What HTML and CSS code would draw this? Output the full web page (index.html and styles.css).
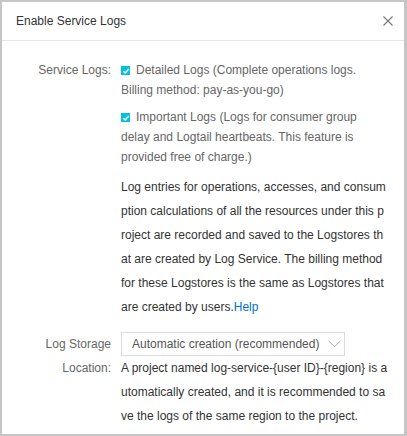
FILE: index.html
```html
<!DOCTYPE html>
<html>
<head>
<meta charset="utf-8">
<link rel="stylesheet" href="styles.css">
</head>
<body>
<div class="dialog">
  <div class="header">
    <span class="title">Enable Service Logs</span>
    <svg class="close" width="10" height="10" viewBox="0 0 10 10"><path d="M0.5 0.5L9.5 9.5M9.5 0.5L0.5 9.5" stroke="#777" stroke-width="1.1" fill="none"/></svg>
  </div>
  <div class="body">
    <div class="row">
      <div class="label label-sm">Service Logs:</div>
      <div class="content">
        <p class="check"><span class="box"><svg width="10" height="10" viewBox="0 0 10 10"><path d="M2.3 5.2L4.2 7L7.8 3" stroke="#fff" stroke-width="1.5" fill="none"/></svg></span>Detailed Logs (Complete operations logs. Billing method: pay-as-you-go)</p>
        <p class="check second"><span class="box"><svg width="10" height="10" viewBox="0 0 10 10"><path d="M2.3 5.2L4.2 7L7.8 3" stroke="#fff" stroke-width="1.5" fill="none"/></svg></span>Important Logs (Logs for consumer group delay and Logtail heartbeats. This feature is provided free of charge.)</p>
        <p class="desc">Log entries for operations, accesses, and consumption calculations of all the resources under this project are recorded and saved to the Logstores that are created by Log Service. The billing method for these Logstores is the same as Logstores that are created by users.<a class="help">Help</a></p>
      </div>
    </div>
    <div class="row storage">
      <div class="label">Log Storage Location:</div>
      <div class="content">
        <div class="select"><span>Automatic creation (recommended)</span><svg width="13" height="8" viewBox="0 0 13 8"><path d="M0.5 0.8L6.5 6.8L12.5 0.8" stroke="#aaa" stroke-width="1" fill="none"/></svg></div>
        <p class="desc desc-wide">A project named log-service-{user ID}-{region} is automatically created, and it is recommended to save the logs of the same region to the project.</p>
      </div>
    </div>
  </div>
</div>
</body>
</html>
```
FILE: styles.css
```css
html, body {
  margin: 0;
  padding: 0;
  background: #c6c6c6;
  font-family: "Liberation Sans", Arial, sans-serif;
  font-size: 12px;
}
.dialog {
  margin: 2px 0 0 2px;
  width: 402px;
  height: 432px;
  background: #fff;
  overflow: hidden;
}
.header {
  height: 38px;
  border-bottom: 1px solid #e5e5e5;
  display: flex;
  align-items: center;
  justify-content: space-between;
  padding: 0 11px 0 14px;
}
.title {
  color: #333;
  font-size: 12px;
}
.close {
  display: block;
  margin-top: -1px;
}
.body {
  padding-top: 19px;
}
.row {
  display: flex;
}
.label {
  width: 119px;
  box-sizing: border-box;
  padding-right: 10px;
  text-align: right;
  color: #666;
  line-height: 24px;
  flex: none;
}
.label-sm {
  line-height: 20px;
}
.content {
  width: 265px;
}
p {
  margin: 0;
}
.check {
  color: #666;
  line-height: 20px;
}
.check.second {
  margin-top: 7px;
}
.box {
  display: inline-block;
  width: 9px;
  height: 9px;
  background: #00c1de;
  margin-right: 6px;
  vertical-align: -1px;
  position: relative;
}
.box svg {
  position: absolute;
  left: -0.5px;
  top: -0.5px;
}
.desc {
  color: #333;
  line-height: 24px;
  word-break: break-all;
  margin-top: 8px;
}
.help {
  color: #0070cc;
}
.storage {
  margin-top: 13px;
}
.select {
  width: 224px;
  height: 24px;
  box-sizing: border-box;
  border: 1px solid #dcdcdc;
  display: flex;
  align-items: center;
  justify-content: space-between;
  padding: 0 3px 0 10px;
  color: #555;
}
.storage .desc {
  margin-top: 0;
}
.desc-wide {
  width: 268px;
}
```
